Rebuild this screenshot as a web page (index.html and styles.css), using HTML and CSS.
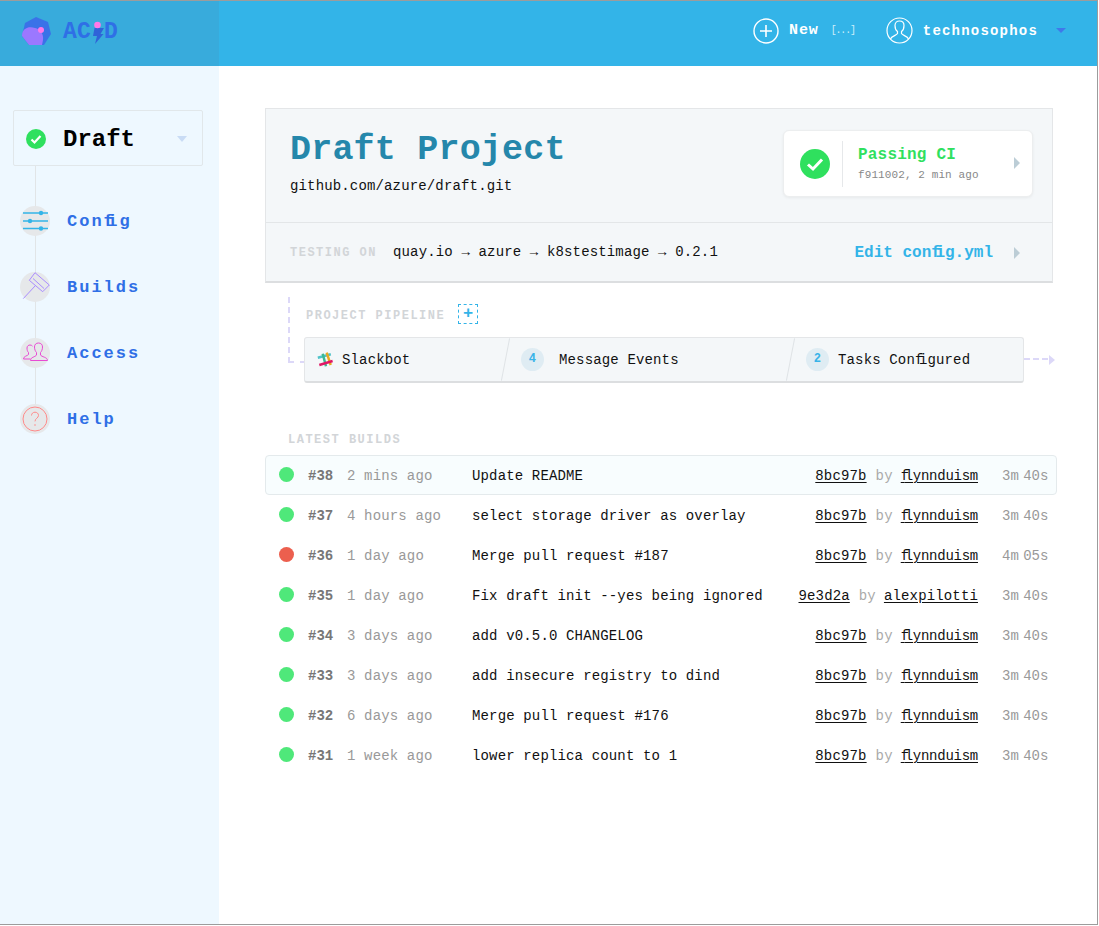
FILE: index.html
```html
<!DOCTYPE html>
<html lang="en">
<head>
    <meta charset="UTF-8">
    <title>Acid - Draft Project</title>
    <link rel="stylesheet" href="styles.css">
</head>
<body>
<div class="frame">
    <header class="topbar">
        <div class="brand">
            <svg class="brand-mark" width="34" height="34" viewBox="0 0 34 34">
                <polygon points="15,1 27,6 30,18 23,29 8,29 1,20 4,7" fill="#3a72e8"/>
                <path d="M1 20 C1 12 8 10 14 12 C19 13 23 18 22 24 L21 29 L8 29 Z" fill="#9b78ff"/>
                <circle cx="20" cy="14" r="3" fill="#ff78e8"/>
            </svg>
            <div class="brand-name">
                <span>AC</span>
                <svg width="13" height="26" viewBox="0 0 13 26">
                    <polygon points="3.500,9 13,9 9.500,15 12.500,15 4,25 6,17 2,17" fill="#2f64d8"/>
                    <circle cx="6.500" cy="6" r="3.300" fill="#ff78e8"/>
                </svg>
                <span>D</span>
            </div>
        </div>
        <nav class="topnav">
            <a class="new-link">
                <svg width="26" height="26" viewBox="0 0 26 26">
                    <circle cx="13" cy="13" r="12" fill="none" stroke="#fff" stroke-width="1.4"/>
                    <path d="M13 7v12M7 13h12" stroke="#fff" stroke-width="1.6"/>
                </svg>
                <b>New</b>
                <small>[...]</small>
            </a>
            <a class="user-link">
                <svg width="27" height="27" viewBox="0 0 27 27">
                    <circle cx="13.5" cy="13.5" r="12.5" fill="none" stroke="#fff" stroke-width="1.2"/>
                    <path d="M4.5 22c1-3 6-3.500 7-5.500v-2c-1.500-1-2.500-3-2.500-6 0-3 2-4.500 4.500-4.500s4.500 1.500 4.500 4.500c0 3-1 5-2.500 6v2c1 2 6 2.500 7 5.500" fill="none" stroke="#fff" stroke-width="1.2"/>
                </svg>
                <span>technosophos</span>
                <i class="caret-down"></i>
            </a>
        </nav>
    </header>

    <div class="layout">
        <aside class="sidebar">
            <div class="project-select">
                <svg width="20" height="20" viewBox="0 0 20 20">
                    <circle cx="10" cy="10" r="10" fill="#2fe05e"/>
                    <path d="M5.500 10.500l3 3 6-6.500" fill="none" stroke="#fff" stroke-width="2.200"/>
                </svg>
                <strong>Draft</strong>
                <i class="caret-soft"></i>
            </div>
            <ul class="sidenav">
                <li>
                    <svg width="30" height="30" viewBox="0 0 30 30">
                        <circle cx="15" cy="15" r="15" fill="#e6e8ea"/>
                        <path d="M3 7h25M3 15h25M3 22.500h25" stroke="#33b4e8" stroke-width="1.300"/>
                        <circle cx="21" cy="7" r="2.200" fill="#33b4e8"/>
                        <circle cx="10" cy="15" r="2.200" fill="#33b4e8"/>
                        <circle cx="21" cy="22.500" r="2.200" fill="#33b4e8"/>
                    </svg>
                    <a>Con<span class="lig">f</span>ig</a>
                </li>
                <li>
                    <svg width="30" height="30" viewBox="0 0 30 30">
                        <circle cx="15" cy="15" r="15" fill="#e6e8ea"/>
                        <path d="M15 .7L29.300 13 22.700 19.700 9.300 8.300ZM13 6.500l11 10M3.300 26.600L15 14" fill="none" stroke="#a98cff" stroke-width="1"/>
                    </svg>
                    <a>Builds</a>
                </li>
                <li>
                    <svg width="30" height="30" viewBox="0 0 30 30">
                        <circle cx="15" cy="15" r="15" fill="#e6e8ea"/>
                        <path d="M3.500 21c0-3 4-3 5-4.500v-2c-1-1-1.500-2.500-1.500-4.500 0-2 1.500-3 3-3 1 0 2 .4 2.500 1.200M3.500 21h7" fill="none" stroke="#e84ad4" stroke-width="1"/>
                        <path d="M10.500 22.500c0-3.500 5-3.500 6-5.500v-2.500c-1-1-2-3-2-5.500 0-2.500 1.500-4 4-4s4 1.500 4 4c0 2.500-1 4.500-2 5.500V17c1 2 7 2 7 5.500Z" fill="none" stroke="#e84ad4" stroke-width="1"/>
                    </svg>
                    <a>Access</a>
                </li>
                <li>
                    <svg width="30" height="30" viewBox="0 0 30 30">
                        <circle cx="15" cy="15" r="15" fill="#e6e8ea"/>
                        <circle cx="15" cy="15" r="12" fill="none" stroke="#ff8a8a" stroke-width="1"/>
                        <path d="M11.500 11.500c0-2 1.500-3.300 3.500-3.300s3.500 1.300 3.500 3.200c0 2.800-3.500 2.800-3.500 6" fill="none" stroke="#ff8a8a" stroke-width="1"/>
                        <circle cx="15" cy="21" r=".8" fill="#ff8a8a"/>
                    </svg>
                    <a>Help</a>
                </li>
            </ul>
        </aside>

        <main class="content">
            <section class="project">
                <div class="project-head">
                    <div class="project-title">
                        <h1>Draft Project</h1>
                        <p>github.com/azure/draft.git</p>
                    </div>
                    <div class="ci-card">
                        <svg width="30" height="30" viewBox="0 0 30 30">
                            <circle cx="15" cy="15" r="15" fill="#2fe05e"/>
                            <path d="M8 15.500l5 4.500 9-9.500" fill="none" stroke="#fff" stroke-width="3"/>
                        </svg>
                        <div class="ci-text">
                            <strong>Passing CI</strong>
                            <small>f911002, 2 min ago</small>
                        </div>
                        <i class="caret-right"></i>
                    </div>
                </div>
                <div class="project-foot">
                    <span class="label">TESTING ON</span>
                    <span class="chain">quay.io → azure → k8stestimage → 0.2.1</span>
                    <a class="edit-link">Edit con<span class="lig">f</span>ig.yml</a>
                    <i class="caret-right"></i>
                </div>
            </section>

            <section class="pipeline">
                <div class="pipeline-head">
                    <span class="label">PROJECT PIPELINE</span>
                    <span class="add-box">+</span>
                </div>
                <div class="pipeline-bar">
                    <div class="pipe-step step-slack">
                        <svg width="17" height="16" viewBox="0 0 17 16">
                            <path d="M.8 5.700l13-3.400" stroke="#4fc3c9" stroke-width="2.500"/>
                            <path d="M9.700 .7l4 12.300" stroke="#e9a820" stroke-width="2.500"/>
                            <path d="M5.700 1.700l3.300 12.600" stroke="#3eb991" stroke-width="2.500"/>
                            <path d="M2.300 13l13.300-4" stroke="#e01765" stroke-width="2.500"/>
                        </svg>
                        <span>Slackbot</span>
                    </div>
                    <div class="pipe-step step-events">
                        <i class="count">4</i>
                        <span>Message Events</span>
                    </div>
                    <div class="pipe-step step-tasks">
                        <i class="count">2</i>
                        <span>Tasks Con<span class="lig">f</span>igured</span>
                    </div>
                </div>
            </section>

            <section class="builds">
                <div class="label builds-label">LATEST BUILDS</div>
                <ul class="build-list">
                    <li class="active"><i class="dot"></i><b>#38</b><time>2 mins ago</time><span class="msg">Update README</span><a>8bc97b</a><em>by</em><a class="tight"><span class="lig">f</span>lynnduism</a><span class="dur">3m 40s</span></li>
                    <li><i class="dot"></i><b>#37</b><time>4 hours ago</time><span class="msg">select storage driver as overlay</span><a>8bc97b</a><em>by</em><a class="tight"><span class="lig">f</span>lynnduism</a><span class="dur">3m 40s</span></li>
                    <li><i class="dot fail"></i><b>#36</b><time>1 day ago</time><span class="msg">Merge pull request #187</span><a>8bc97b</a><em>by</em><a class="tight"><span class="lig">f</span>lynnduism</a><span class="dur">4m 05s</span></li>
                    <li><i class="dot"></i><b>#35</b><time>1 day ago</time><span class="msg">Fix draft init --yes being ignored</span><a>9e3d2a</a><em>by</em><a>alexpilotti</a><span class="dur">3m 40s</span></li>
                    <li><i class="dot"></i><b>#34</b><time>3 days ago</time><span class="msg">add v0.5.0 CHANGELOG</span><a>8bc97b</a><em>by</em><a class="tight"><span class="lig">f</span>lynnduism</a><span class="dur">3m 40s</span></li>
                    <li><i class="dot"></i><b>#33</b><time>3 days ago</time><span class="msg">add insecure registry to dind</span><a>8bc97b</a><em>by</em><a class="tight"><span class="lig">f</span>lynnduism</a><span class="dur">3m 40s</span></li>
                    <li><i class="dot"></i><b>#32</b><time>6 days ago</time><span class="msg">Merge pull request #176</span><a>8bc97b</a><em>by</em><a class="tight"><span class="lig">f</span>lynnduism</a><span class="dur">3m 40s</span></li>
                    <li><i class="dot"></i><b>#31</b><time>1 week ago</time><span class="msg">lower replica count to 1</span><a>8bc97b</a><em>by</em><a class="tight"><span class="lig">f</span>lynnduism</a><span class="dur">3m 40s</span></li>
                </ul>
            </section>
        </main>
    </div>
</div>
</body>
</html>
```

FILE: styles.css
```css
*{
    margin: 0;padding: 0;
    box-sizing: border-box;
}
ul,li{list-style: none}
i,em{font-style: normal}
svg{display: block;flex: none}
html,body{background: #fff;overflow: hidden}
body{
    font-family: "Liberation Mono", "DejaVu Sans Mono", monospace;
    font-size: 14px;
    letter-spacing: .15px;
    color: #111;
}
.frame{
    width: 1098px;
    height: 925px;
    border-top: 1px solid #9c9c9c;
    border-right: 1px solid #9c9c9c;
    border-bottom: 1px solid #9c9c9c;
    display: flex;
    flex-direction: column;
}
/* the reference font joins fi and fl into one cell */
.lig{letter-spacing: -4.5px}

/* top bar */
.topbar{
    height: 65px;
    flex: none;
    display: flex;
    justify-content: space-between;
    background: #33b4e8;
}
.brand{
    width: 219px;
    background: #38abdc;
    display: flex;
    align-items: center;
    padding: 0 0 3px 21px;
}
.brand-mark{margin-top: 2px}
.brand-name{
    display: flex;
    align-items: center;
    margin-left: 8px;
    font-size: 23px;
    font-weight: 700;
    color: #2f6fe6;
}
.topnav{
    display: flex;
    align-items: center;
    padding: 0 31px 6px 0;
    color: #fff;
}
.new-link,.user-link{display: flex;align-items: center}
.new-link svg{margin-right: 10px}
.new-link b{font-size: 15px;letter-spacing: .9px}
.new-link small{
    font-size: 10px;
    margin-left: 12px;
    color: #cdeefa;
    letter-spacing: -1.200px;
}
.user-link{margin-left: 31px}
.user-link span{
    margin-left: 10px;
    font-weight: 700;
    letter-spacing: 1.200px;
}
.caret-down{
    width: 0;
    height: 0;
    margin-left: 18px;
    border-left: 5px solid transparent;
    border-right: 5px solid transparent;
    border-top: 5px solid #3f78ea;
}

/* sidebar */
.layout{flex: 1;display: flex;min-height: 0}
.sidebar{
    width: 219px;
    flex: none;
    background: #eef8ff;
    padding: 44px 16px 0 13px;
}
.project-select{
    width: 190px;
    height: 56px;
    display: flex;
    align-items: center;
    padding: 1px 15px 0 12px;
    border: 1px solid #e1e7ea;
    border-radius: 2px;
}
.project-select strong{
    flex: 1;
    margin-left: 17px;
    padding-top: 1px;
    font-size: 24px;
    letter-spacing: 0;
    color: #000;
}
.caret-soft{
    width: 0;
    height: 0;
    border-left: 5px solid transparent;
    border-right: 5px solid transparent;
    border-top: 6px solid #c9dcf5;
}
.sidenav{
    position: relative;
    padding-top: 22px;
}
.sidenav:before{
    content: "";
    position: absolute;
    left: 22px;
    top: 0;
    bottom: 30px;
    width: 1px;
    background: #e1e5e7;
}
.sidenav li{
    position: relative;
    height: 66px;
    display: flex;
    align-items: center;
    padding-left: 7px;
}
.sidenav a{
    margin-left: 17px;
    font-size: 17px;
    font-weight: 700;
    letter-spacing: 2px;
    color: #2f6fe6;
}
.sidenav .lig{letter-spacing: -6.5px}

/* project panel */
.content{
    flex: 1;
    padding: 42px 0 0 46px;
}
.project{
    width: 788px;
    background: #f4f7f9;
    border: 1px solid #e4e6e8;
    border-bottom: 2px solid #dcdee0;
}
.project-head{
    height: 114px;
    display: flex;
    justify-content: space-between;
    padding: 21px 19px 0 24px;
    border-bottom: 1px solid #e3e6e8;
}
.project-title h1{
    margin-top: 1px;
    font-size: 35px;
    line-height: 38px;
    letter-spacing: .200px;
    font-weight: 700;
    color: #2587ab;
}
.project-title p{
    margin-top: 7px;
    line-height: 20px;
}
.ci-card{
    width: 250px;
    height: 67px;
    display: flex;
    align-items: center;
    background: #fff;
    border: 1px solid #eceeef;
    border-radius: 6px;
    box-shadow: 0 1px 3px rgba(0,0,0,.06);
    padding: 0 12px 0 16px;
}
.ci-text{
    flex: 1;
    height: 46px;
    margin-left: 12px;
    padding: 4px 0 0 15px;
    border-left: 1px solid #e6e8ea;
}
.ci-text strong{
    display: block;
    font-size: 16px;
    line-height: 20px;
    letter-spacing: .2px;
    color: #2fe05e;
}
.ci-text small{
    display: block;
    margin-top: 4px;
    font-size: 11px;
    letter-spacing: .1px;
    color: #888;
}
.ci-card .caret-right{margin-bottom: 2px}
.caret-right{
    width: 0;
    height: 0;
    border-top: 6px solid transparent;
    border-bottom: 6px solid transparent;
    border-left: 6px solid #bccdd6;
}
.project-foot{
    height: 58px;
    display: flex;
    align-items: center;
    padding: 0 32px 0 24px;
}
.project-foot .caret-right{margin-top: 2px}
.project-foot .label{padding-top: 1px}
.label{
    font-size: 12px;
    font-weight: 700;
    letter-spacing: 1.500px;
    color: #d2d5d8;
}
.chain{
    flex: 1;
    margin-left: 16px;
    letter-spacing: .150px;
}
.edit-link{
    margin-right: 21px;
    padding-top: 2px;
    font-size: 16px;
    font-weight: 700;
    letter-spacing: 0;
    color: #33b4e8;
}
.edit-link .lig{letter-spacing: -5.5px}

/* pipeline */
.pipeline{
    position: relative;
    width: 790px;
    height: 100px;
    padding: 21px 0 0 39px;
}
.pipeline:before{
    content: "";
    position: absolute;
    left: 23px;
    top: 14px;
    width: 16px;
    height: 64px;
    border-left: 2px dashed #dcd8f8;
    border-bottom: 2px dashed #dcd8f8;
}
.pipeline-head{
    height: 20px;
    display: flex;
    align-items: center;
    margin-left: 2px;
}
.pipeline-head .label{padding-top: 3px}
.add-box{
    width: 20px;
    height: 20px;
    margin-left: 13px;
    border: 1px dashed #33b4e8;
    text-align: center;
    font-size: 17px;
    font-weight: 700;
    line-height: 18px;
    color: #33b4e8;
}
.pipeline-bar{
    width: 720px;
    height: 46px;
    margin-top: 13px;
    display: flex;
    background: #f4f7f9;
    border: 1px solid #e4e6e8;
    border-bottom: 2px solid #dcdee0;
    border-radius: 3px;
    position: relative;
}
.pipeline-bar:after{
    content: "";
    position: absolute;
    right: -25px;
    top: 20px;
    width: 24px;
    border-top: 2px dashed #dcd8f8;
}
.pipeline:after{
    content: "";
    position: absolute;
    left: 784px;
    top: 72px;
    border-top: 5px solid transparent;
    border-bottom: 5px solid transparent;
    border-left: 6px solid #dcd8f8;
}
.pipe-step{
    position: relative;
    display: flex;
    align-items: center;
    height: 43px;
}
.pipe-step + .pipe-step:before{
    content: "";
    position: absolute;
    left: 0;
    top: 0;
    height: 43px;
    width: 1px;
    background: #dfe3e6;
    transform: rotate(11deg);
}
.step-slack{width: 200px;padding-left: 12px}
.step-slack span{margin-left: 8px}
.step-events{width: 285px;padding-left: 16px}
.step-events span{margin-left: 15px}
.step-tasks{flex: 1;padding-left: 16px}
.step-tasks > span{margin-left: 9px}
.count{
    width: 23px;
    height: 23px;
    border-radius: 50%;
    background: #dfecf3;
    text-align: center;
    font-size: 12px;
    font-weight: 700;
    line-height: 23px;
    color: #38b3e8;
}

/* builds */
.builds-label{
    height: 17px;
    margin-left: 23px;
    margin-top: 49px;
    line-height: 17px;
}
.build-list{
    width: 792px;
    margin-top: 6px;
}
.build-list li{
    height: 40px;
    display: flex;
    align-items: center;
    padding: 2px 8px 0 13px;
    border: 1px solid transparent;
    border-radius: 4px;
}
.build-list li.active{
    background: #f8fdfe;
    border-color: #e4eaec;
}
.dot{
    width: 15px;
    height: 15px;
    margin-top: -4px;
    border-radius: 50%;
    background: #4fe87a;
}
.dot.fail{background: #ec5f4e}
.build-list b{
    width: 39px;
    margin-left: 14px;
    font-size: 14px;
    letter-spacing: 0;
    color: #777;
}
.build-list time{
    width: 125px;
    color: #999;
}
.msg{flex: 1}
.build-list a{
    text-decoration: underline;
    text-underline-offset: 2px;
    color: #111;
}
.build-list a.tight{letter-spacing: -.25px}
.build-list em{
    margin: 0 8px 0 9px;
    color: #aaa;
}
.dur{
    width: 46px;
    margin-left: 24px;
    text-align: right;
    white-space: nowrap;
    word-spacing: -4px;
    letter-spacing: 0;
    color: #999;
}
```
